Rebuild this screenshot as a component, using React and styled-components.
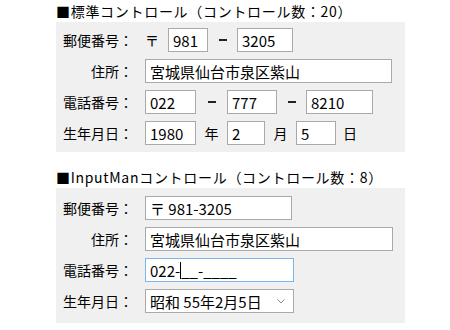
import styled, { createGlobalStyle } from "styled-components";

const GlobalStyle = createGlobalStyle`
  body {
    margin: 0;
    background: #ffffff;
    font-family: "Noto Sans CJK JP", "Noto Sans", sans-serif;
    color: #000;
  }
`;

const Page = styled.div`
  padding: 0 0 0 56px;
  width: 450px;
  height: 330px;
  box-sizing: border-box;
`;

const Title = styled.div`
  height: 22px;
  line-height: 22px;
  font-size: 14px;
  letter-spacing: 0.7px;
  margin-top: ${(p) => p.$top || 0}px;
  white-space: nowrap;
`;

const Panel = styled.div`
  width: 349px;
  background: #f0f0f0;
  box-sizing: border-box;
  padding: ${(p) => p.$pad};
  display: flex;
  flex-direction: column;
  gap: 7px;
`;

const Row = styled.div`
  display: flex;
  align-items: center;
  height: 24px;
  padding-left: 7px;
`;

const Label = styled.div`
  width: 70px;
  margin-right: 12px;
  text-align: right;
  font-size: 14px;
  white-space: nowrap;
`;

const Box = styled.input`
  box-sizing: border-box;
  width: ${(p) => p.$w}px;
  height: 24px;
  margin: 0;
  padding: 0 4px;
  border: 1px solid ${(p) => (p.$focus ? "#7eb4ea" : "#a9a9a9")};
  background: #fff;
  font-family: "Noto Sans CJK JP", "Noto Sans", sans-serif;
  font-size: 15px;
  color: #000;
  outline: none;
`;

const Sep = styled.span`
  width: ${(p) => p.$w}px;
  text-align: ${(p) => p.$align || "center"};
  font-size: 14px;
  flex-shrink: 0;
`;

const Dash = styled.span`
  width: ${(p) => p.$w}px;
  display: flex;
  justify-content: center;
  flex-shrink: 0;
  &::before {
    content: "";
    width: 8px;
    height: 2px;
    background: #222;
  }
`;

const FakeBox = styled.div`
  box-sizing: border-box;
  width: ${(p) => p.$w}px;
  height: 24px;
  padding: 0 4px;
  border: 1px solid ${(p) => (p.$focus ? "#7eb4ea" : "#a9a9a9")};
  background: #fff;
  font-size: 15px;
  display: flex;
  align-items: center;
  white-space: nowrap;
  position: relative;
`;

const Caret = styled.span`
  display: inline-block;
  width: 1px;
  height: 17px;
  background: #000;
`;

const Chevron = styled.svg`
  position: absolute;
  right: 8px;
  top: 9px;
`;

export default function App() {
  return (
    <>
      <GlobalStyle />
      <Page>
        <Title>■標準コントロール（コントロール数：20）</Title>
        <Panel $pad="6px 0 7px 0">
          <Row>
            <Label>郵便番号：</Label>
            <Sep $w={23} $align="left">〒</Sep>
            <Box $w={40} defaultValue="981" readOnly />
            <Dash $w={29} />
            <Box $w={56} defaultValue="3205" readOnly />
          </Row>
          <Row>
            <Label>住所：</Label>
            <Box $w={247} defaultValue="宮城県仙台市泉区紫山" readOnly />
          </Row>
          <Row>
            <Label>電話番号：</Label>
            <Box $w={51} defaultValue="022" readOnly />
            <Dash $w={31} />
            <Box $w={50} defaultValue="777" readOnly />
            <Dash $w={29} />
            <Box $w={67} defaultValue="8210" readOnly />
          </Row>
          <Row>
            <Label>生年月日：</Label>
            <Box $w={51} defaultValue="1980" readOnly />
            <Sep $w={31}>年</Sep>
            <Box $w={38} defaultValue="2" readOnly />
            <Sep $w={31}>月</Sep>
            <Box $w={40} defaultValue="5" readOnly />
            <Sep $w={28}>日</Sep>
          </Row>
        </Panel>

        <Title $top={14}>■InputManコントロール（コントロール数：8）</Title>
        <Panel $pad="8px 0 10px 0">
          <Row>
            <Label>郵便番号：</Label>
            <Box $w={147} defaultValue="〒 981-3205" readOnly />
          </Row>
          <Row>
            <Label>住所：</Label>
            <Box $w={248} defaultValue="宮城県仙台市泉区紫山" readOnly />
          </Row>
          <Row>
            <Label>電話番号：</Label>
            <FakeBox $w={149} $focus>
              022-<Caret />__-____
            </FakeBox>
          </Row>
          <Row>
            <Label>生年月日：</Label>
            <FakeBox $w={149}>
              昭和 55年2月5日
              <Chevron width="8" height="5" viewBox="0 0 8 5">
                <path d="M0.5 0.5 L4 4 L7.5 0.5" fill="none" stroke="#888" strokeWidth="1" />
              </Chevron>
            </FakeBox>
          </Row>
        </Panel>
      </Page>
    </>
  );
}
